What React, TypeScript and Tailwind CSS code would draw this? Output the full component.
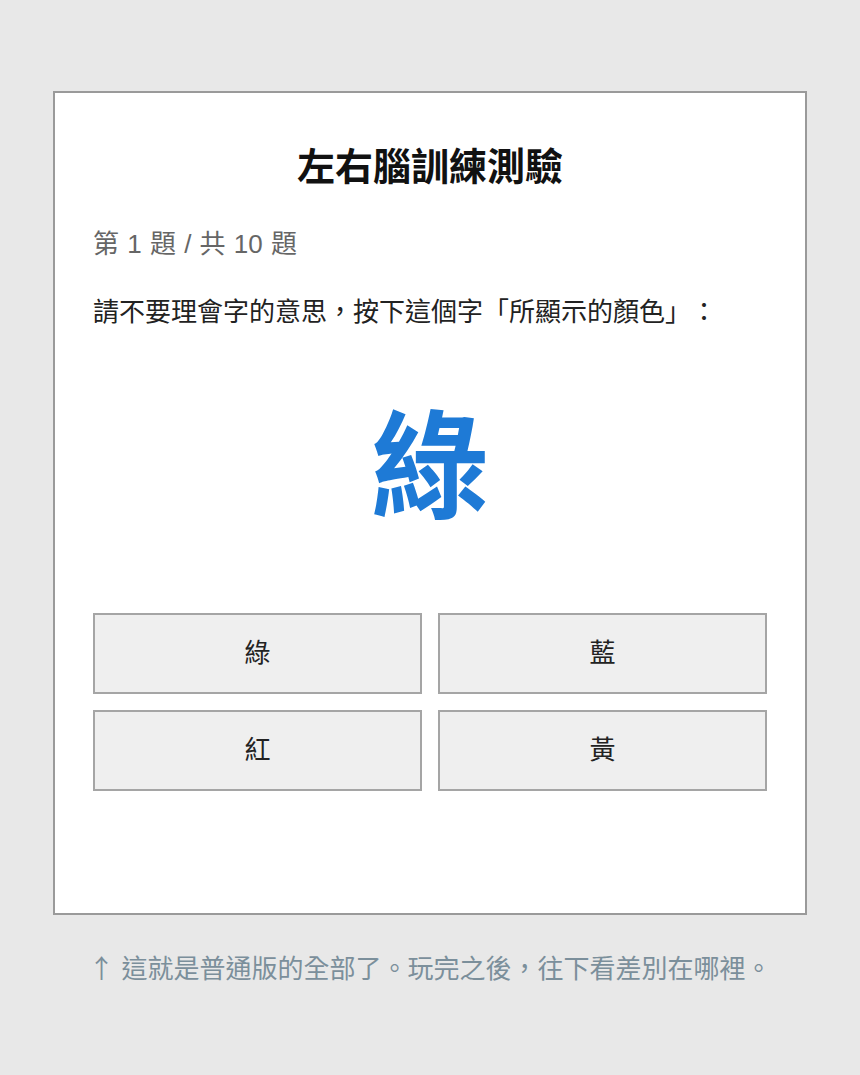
import React from "react";

export default function App() {
  const options = ["綠", "藍", "紅", "黃"];
  return (
    <div
      lang="zh-TW"
      className="min-h-[1075px] w-full bg-[#e8e8e8] pt-[91px] font-['Liberation_Sans','Noto_Sans_CJK_TC',sans-serif] [text-spacing-trim:space-all]"
    >
      <div className="mx-auto w-[754px] border-2 border-[#9a9a9a] bg-white px-[38px] pt-[38px] pb-[122px]">
        <h1 className="mt-[13px] text-center text-[38px] leading-[46px] font-bold text-[#111]">左右腦訓練測驗</h1>
        <div className="mt-[36px] text-[26px] leading-[36px] text-[#666] [word-spacing:1px]">第 1 題 / 共 10 題</div>
        <div className="mt-[32px] text-[26px] leading-[36px] text-[#222]">請不要理會字的意思，按下這個字「所顯示的顏色」：</div>
        <div className="mt-[71px] text-center text-[117px] leading-[136px] font-bold text-[#1e7ad6]">綠</div>
        <div className="mt-[76px] grid grid-cols-2 gap-[16px]">
          {options.map((o) => (
            <button
              key={o}
              className="h-[81px] border-2 border-[#a5a5a5] bg-[#efefef] font-['Liberation_Sans','Noto_Sans_CJK_TC',sans-serif] text-[26px] text-[#222]"
            >
              {o}
            </button>
          ))}
        </div>
      </div>
      <div className="mt-[34px] text-center text-[26px] leading-[36px] text-[#7b8f9b]">
        <span className="font-['Noto_Sans_CJK_TC',sans-serif]">↑</span> 這就是普通版的全部了。玩完之後，往下看差別在哪裡。
      </div>
    </div>
  );
}
